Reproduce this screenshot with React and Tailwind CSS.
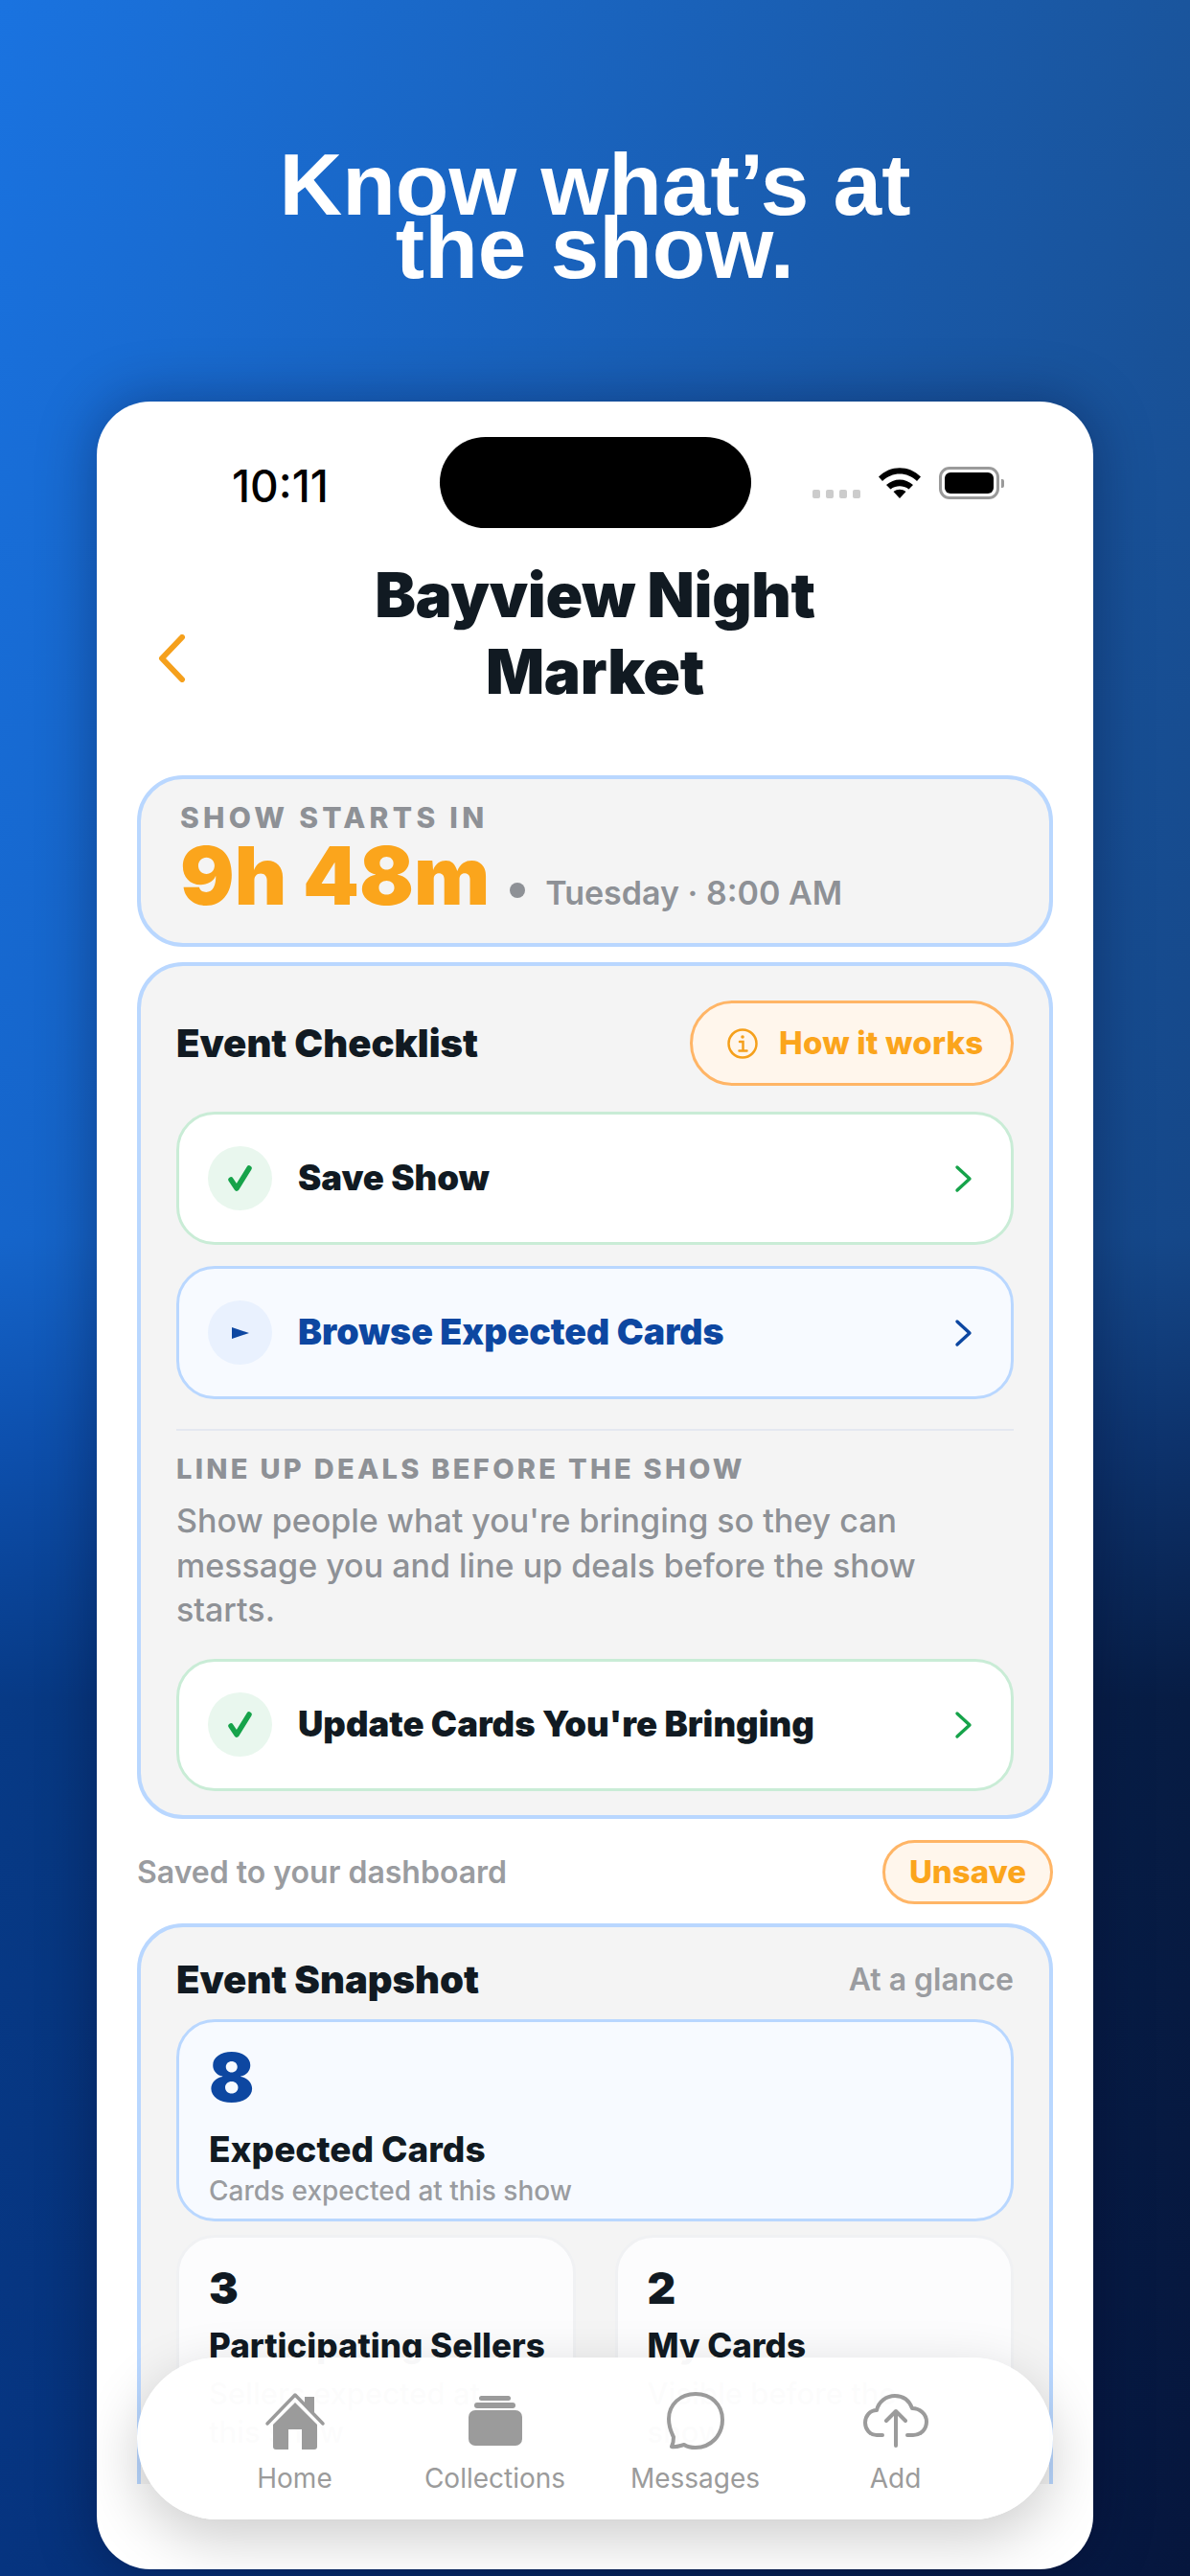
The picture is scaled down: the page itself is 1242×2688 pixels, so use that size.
const FONT = 'font-["Inter","Noto_Sans",sans-serif]';

function Check() {
  return (
    <svg width="32" height="32" viewBox="0 0 32 32" fill="none">
      <path d="M6 17l6 9L25 5" stroke="#16a34a" strokeWidth="5.500" strokeLinecap="round" strokeLinejoin="round" />
    </svg>
  );
}

function Chevron({ color }) {
  return (
    <svg width="20" height="30" viewBox="0 0 20 30" fill="none">
      <path d="M3 3l13 12L3 27" stroke={color} strokeWidth="3.400" strokeLinecap="round" strokeLinejoin="round" />
    </svg>
  );
}

function ChecklistRow({ label, done, h }) {
  return (
    <div
      className={`flex items-center pl-[30px] pr-[39px] rounded-[40px] border-[3px] ${h} ${
        done ? 'bg-white border-[#c9ecd6]' : 'bg-[#f7faff] border-[#b9d7ff]'
      }`}
    >
      <div className={`w-[67px] h-[67px] rounded-full flex items-center justify-center ${done ? 'bg-[#e9f7ee]' : 'bg-[#e9f1fe]'}`}>
        {done ? (
          <Check />
        ) : (
          <svg width="20" height="14" viewBox="0 0 20 14"><path d="M1 1l18 6L1 13z" fill="#0d47a1" /></svg>
        )}
      </div>
      <span className={`ml-[27px] flex-1 font-black ${done ? 'text-[36.500px] text-[#111a22]' : 'text-[37.500px] text-[#0d47a1]'}`}>{label}</span>
      <Chevron color={done ? '#16a34a' : '#0d47a1'} />
    </div>
  );
}

function StatCard({ value, title, lines }) {
  return (
    <div className="h-[300px] bg-[#fcfcfd] border-[3px] border-[#f0f1f3] rounded-[40px] pl-[31px] pr-[20px] pt-[22px]">
      <div className="text-[46px] leading-[60px] font-black text-[#111a22]">{value}</div>
      <div className="mt-[7px] text-[35px] leading-[46px] font-extrabold text-[#111a22] whitespace-nowrap">{title}</div>
      <div className="mt-[8px] text-[31px] leading-[40px] font-medium text-[#9a9ca0]">
        {lines.map((l) => <div key={l}>{l}</div>)}
      </div>
    </div>
  );
}

function HomeIcon() {
  return (
    <svg width="64" height="60" viewBox="0 0 64 60" fill="none">
      <path d="M3 33L32 3l29 30" stroke="#9b9b9b" strokeWidth="3.500" strokeLinecap="round" strokeLinejoin="round" />
      <path d="M42 5h10v17l-10-10z" fill="#9b9b9b" />
      <path d="M32 11l23 23v23a3 3 0 0 1-3 3H39V39H25v21H12a3 3 0 0 1-3-3V34z" fill="#9b9b9b" />
    </svg>
  );
}

function CollectionsIcon() {
  return (
    <svg width="56" height="52" viewBox="0 0 56 52" fill="none">
      <rect x="11" y="0" width="33" height="5" rx="2.500" fill="#9b9b9b" />
      <rect x="6" y="7" width="43" height="6" rx="3" fill="#9b9b9b" />
      <rect x="0" y="15" width="56" height="37" rx="7" fill="#9b9b9b" />
    </svg>
  );
}

function MessagesIcon() {
  return (
    <svg width="60" height="60" viewBox="0 0 60 60" fill="none">
      <path d="M5 57c1-2 2-6 2-10C4 41 2 36 2 28 2 13 14 2 30 2s28 11 28 27-12 29-28 29c-5 0-9-1-12-3-4 1-9 3-13 2z" stroke="#9b9b9b" strokeWidth="4" strokeLinejoin="round" />
    </svg>
  );
}

function AddIcon() {
  return (
    <svg width="68" height="56" viewBox="0 0 68 56" fill="none">
      <path d="M20 43h-6C7 43 2 37 2 30s5-13 12-13c2-9 10-15 19-15 9 0 15 5 18 13 8 0 15 6 15 14s-6 14-14 14h-6" stroke="#9b9b9b" strokeWidth="4" strokeLinecap="round" strokeLinejoin="round" />
      <path d="M34 54V18M24 28l10-10 10 10" stroke="#9b9b9b" strokeWidth="4" strokeLinecap="round" strokeLinejoin="round" />
    </svg>
  );
}

const TABS = [
  { label: 'Home', icon: <HomeIcon /> },
  { label: 'Collections', icon: <CollectionsIcon /> },
  { label: 'Messages', icon: <MessagesIcon /> },
  { label: 'Add', icon: <AddIcon /> },
];

export default function App() {
  return (
    <div className={`${FONT} w-[1242px] h-[2688px] overflow-hidden bg-blend-difference bg-[linear-gradient(90deg,#000000_0%,#001e43_100%),linear-gradient(180deg,#1a73e0_0%,#1565cb_48%,#0d50ae_56%,#073a86_66%,#063480_100%)]`}>
      {/* Headline */}
      <h1 className='pt-[160px] h-[419px] text-center text-white text-[91px] leading-[66px] font-bold font-["Liberation_Sans",sans-serif]'>
        Know what’s at<br />the show.
      </h1>

      {/* Phone */}
      <div className="relative mx-[101px] h-[2262px] bg-white rounded-[56px] overflow-hidden shadow-[0_0_60px_rgba(0,0,30,0.35)]">
        {/* Status bar */}
        <div className="flex pt-[37px] pl-[141px] h-[132px]">
          <div className="w-[217px] pt-[26px] text-[46px] leading-[50px] font-medium text-black">10:11</div>
          <div className="w-[325px] h-[95px] bg-black rounded-full" />
          <div className="flex items-start ml-[64px] pt-[32px]">
            <div className="flex gap-[6px] mt-[23px]">
              {[0, 1, 2, 3].map((i) => <div key={i} className="w-[8px] h-[9px] rounded-[2px] bg-[#cccccc]" />)}
            </div>
            <svg className="ml-[19px]" width="44" height="32" viewBox="0 0 44 32">
              <path d="M0 9.500C12-3 32-3 44 9.500l-4 4.500C30 4 14 4 4 14z" fill="#000" />
              <path d="M8 18c8-7.500 20-7.500 28 0l-4.500 4.500c-5.500-4.500-13.500-4.500-19 0z" fill="#000" />
              <path d="M15.500 25c4-3 9-3 13 0L22 32z" fill="#000" />
            </svg>
            <div className="ml-[19px] -mt-[1px] flex items-center">
              <div className="w-[63px] h-[34px] rounded-[11px] border-[3px] border-[#9a9a9a] p-[3px]">
                <div className="w-full h-full rounded-[6px] bg-black" />
              </div>
              <div className="ml-[2px] w-[3px] h-[9px] rounded-r-[2px] bg-[#9a9a9a]" />
            </div>
          </div>
        </div>

        {/* Title */}
        <div className="flex mt-[30px]">
          <div className="w-[120px] pl-[63px] pt-[81px]">
            <svg width="30" height="50" viewBox="0 0 30 50" fill="none">
              <path d="M26 3L5 25l21 22" stroke="#f5a01c" strokeWidth="6" strokeLinecap="round" strokeLinejoin="round" />
            </svg>
          </div>
          <div className="w-[800px] text-center text-[64px] leading-[80px] font-black text-[#111a22] tracking-[-0.3px]">
            Bayview Night<br />Market
          </div>
        </div>

        {/* Scroll content, cut off at the bottom like the real list */}
        <div className="mt-[68px] mx-[42px] h-[1783px] overflow-hidden">
          <div className="h-[179px] bg-[#f4f4f4] border-[4px] border-[#b9d7ff] rounded-[48px] pl-[41px] pt-[23px]">
            <div className="text-[30px] leading-[34px] font-extrabold tracking-[4.300px] text-[#8e9196]">SHOW STARTS IN</div>
            <div className="flex items-baseline -mt-[1px]">
              <span className="text-[84px] leading-[90px] font-black text-[#fba51c]">9h 48m</span>
              <span className="ml-[21px] mr-[21px] w-[16px] h-[16px] rounded-full bg-[#8e9196] self-center mt-[30px]" />
              <span className="text-[34px] font-semibold text-[#8e9196]">Tuesday · 8:00 AM</span>
            </div>
          </div>

          <div className="mt-[16px] h-[894px] bg-[#f4f4f4] border-[4px] border-[#b9d7ff] rounded-[48px] px-[37px] pt-[36px]">
            <div className="flex items-center justify-between">
              <span className="text-[40px] font-black text-[#111a22]">Event Checklist</span>
              <div className="flex items-center w-[338px] h-[89px] rounded-full bg-[#fff6ec] border-[3px] border-[#ffb566] pl-[35px]">
                <svg width="34" height="34" viewBox="0 0 34 34" fill="none">
                  <circle cx="17" cy="17" r="14.500" stroke="#f5a01c" strokeWidth="2.500" />
                  <path d="M14 15h3.500v9M13.500 24.500h8" stroke="#f5a01c" strokeWidth="2.500" strokeLinecap="round" />
                  <circle cx="17" cy="10" r="1.800" fill="#f5a01c" />
                </svg>
                <span className="ml-[21px] text-[33px] font-extrabold text-[#fba51c] tracking-[0.2px]">How it works</span>
              </div>
            </div>
            <div className="mt-[27px] flex flex-col gap-[22px]">
              <ChecklistRow label="Save Show" done h="h-[139px]" />
              <ChecklistRow label="Browse Expected Cards" h="h-[139px]" />
            </div>
            <div className="mt-[31px] h-[2px] bg-[#e4e8f0]" />
            <div className="mt-[22px] text-[29px] leading-[36px] font-extrabold tracking-[3.300px] text-[#8e9196]">LINE UP DEALS BEFORE THE SHOW</div>
            <p className="mt-[13px] text-[34px] leading-[46.500px] font-medium text-[#8e9196]">
              Show people what you're bringing so they can message you and line up deals before the show starts.
            </p>
            <div className="mt-[27px]">
              <ChecklistRow label="Update Cards You're Bringing" done h="h-[138px]" />
            </div>
          </div>

          <div className="flex items-center justify-between mt-[22px] h-[67px]">
            <span className="text-[32px] font-semibold text-[#9a9ca0]">Saved to your dashboard</span>
            <div className="w-[178px] h-[67px] rounded-full bg-[#fff6ec] border-[3px] border-[#ffb566] flex items-center justify-center text-[33px] font-extrabold text-[#fba51c]">
              Unsave
            </div>
          </div>

          <div className="mt-[20px] h-[700px] bg-[#f4f4f4] border-[4px] border-[#b9d7ff] rounded-[48px] px-[37px] pt-[28px]">
            <div className="flex items-center justify-between h-[54px]">
              <span className="text-[40px] font-black text-[#111a22]">Event Snapshot</span>
              <span className="text-[32px] font-semibold text-[#9a9ca0]">At a glance</span>
            </div>
            <div className="mt-[14px] h-[211px] bg-[#f7faff] border-[3px] border-[#b9d7ff] rounded-[40px] pl-[31px] pt-[20px]">
              <div className="text-[70px] leading-[76px] font-black text-[#0d47a1]">8</div>
              <div className="mt-[14px] text-[37px] leading-[46px] font-extrabold text-[#111a22]">Expected Cards</div>
              <div className="mt-[2px] text-[28px] leading-[36px] font-medium text-[#9a9ca0]">Cards expected at this show</div>
            </div>
            <div className="mt-[14px] grid grid-cols-2 gap-[41px]">
              <StatCard value="3" title="Participating Sellers" lines={['Sellers expected at', 'this show']} />
              <StatCard value="2" title="My Cards" lines={['Visible before the', 'show']} />
            </div>
          </div>
        </div>

        {/* Floating tab bar */}
        <div className="absolute left-[42px] right-[42px] top-[2041px] h-[169px] rounded-[85px] bg-white/[0.97] shadow-[0_20px_60px_rgba(0,0,0,0.2)] grid grid-cols-4 px-[60px]">
          {TABS.map((t) => (
            <div key={t.label} className="flex flex-col items-center">
              <div className="h-[60px] mt-[36px] flex items-center">{t.icon}</div>
              <span className="mt-[12px] text-[28px] leading-[36px] text-[#9b9b9b]">{t.label}</span>
            </div>
          ))}
        </div>
      </div>
    </div>
  );
}
